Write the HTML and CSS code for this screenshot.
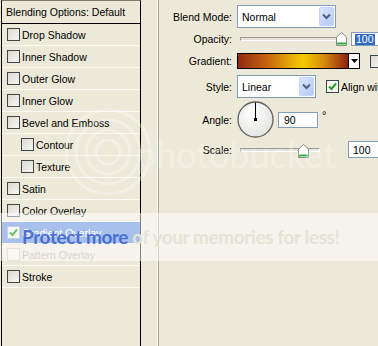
FILE: index.html
```html
<!DOCTYPE html>
<html>
<head>
<meta charset="utf-8">
<link rel="stylesheet" href="styles.css">
</head>
<body>
<div class="app">
  <ul class="list">
    <li class="head">Blending Options: Default</li>
    <li class="item"><span class="cb"></span>Drop Shadow</li>
    <li class="item"><span class="cb"></span>Inner Shadow</li>
    <li class="item"><span class="cb"></span>Outer Glow</li>
    <li class="item"><span class="cb"></span>Inner Glow</li>
    <li class="item"><span class="cb"></span>Bevel and Emboss</li>
    <li class="item sub"><span class="cb"></span>Contour</li>
    <li class="item sub"><span class="cb"></span>Texture</li>
    <li class="item"><span class="cb"></span>Satin</li>
    <li class="item"><span class="cb"></span>Color Overlay</li>
    <li class="item sel"><span class="cb on"><svg width="11" height="11" viewBox="0 0 11 11"><path d="M2 5.5 L4.5 8 L9 2.5" fill="none" stroke="#6cc46c" stroke-width="2"/></svg></span>Gradient Overlay</li>
    <li class="item dis"><span class="cb"></span>Pattern Overlay</li>
    <li class="item"><span class="cb"></span>Stroke</li>
  </ul>
  <div class="strip"></div>
  <div class="divider"></div>
  <div class="props">
    <div class="row r1">
      <span class="lbl">Blend Mode:</span>
      <div class="select wide"><span class="val">Normal</span><svg class="dd" width="15" height="19" viewBox="0 0 15 19"><defs><linearGradient id="g1" x1="0" y1="0" x2="1" y2="1"><stop offset="0" stop-color="#dce7fd"/><stop offset="1" stop-color="#b3c8f5"/></linearGradient></defs><rect x="0.5" y="0.5" width="14" height="18" rx="1.5" fill="url(#g1)" stroke="#c3d3fa"/><path d="M4 7.5 L7.5 11 L11 7.5" fill="none" stroke="#4d6185" stroke-width="2"/></svg></div>
    </div>
    <div class="row r2">
      <span class="lbl">Opacity:</span>
      <div class="slider op"><div class="track"></div><svg class="thumb" width="11" height="14" viewBox="0 0 11 14"><path d="M0.5 5 L5.5 0.5 L10.5 5 V13.5 H0.5 Z" fill="#fff" stroke="#8a8a86"/><path d="M1 11.5 H10" stroke="#2fae3c" stroke-width="2"/></svg></div>
      <div class="input op-in"><span class="hl">100</span></div>
    </div>
    <div class="row r3">
      <span class="lbl">Gradient:</span>
      <div class="grad"></div>
      <div class="garrow"><svg width="7" height="4" viewBox="0 0 7 4"><path d="M0 0 H7 L3.5 4 Z" fill="#000"/></svg></div>
      <div class="rev"></div>
    </div>
    <div class="row r4">
      <span class="lbl">Style:</span>
      <div class="select narrow"><span class="val">Linear</span><svg class="dd" width="15" height="19" viewBox="0 0 15 19"><defs><linearGradient id="g2" x1="0" y1="0" x2="1" y2="1"><stop offset="0" stop-color="#dce7fd"/><stop offset="1" stop-color="#b3c8f5"/></linearGradient></defs><rect x="0.5" y="0.5" width="14" height="18" rx="1.5" fill="url(#g2)" stroke="#c3d3fa"/><path d="M4 7.5 L7.5 11 L11 7.5" fill="none" stroke="#4d6185" stroke-width="2"/></svg></div>
      <span class="cb green"><svg width="11" height="11" viewBox="0 0 11 11"><path d="M2 5.5 L4.5 8 L9 2.5" fill="none" stroke="#21a121" stroke-width="2"/></svg></span>
      <span class="align">Align with Layer</span>
    </div>
    <div class="row r5">
      <span class="lbl">Angle:</span>
      <svg class="dial" width="37" height="37" viewBox="0 0 37 37"><defs><radialGradient id="dg" cx="0.4" cy="0.35" r="0.7"><stop offset="0" stop-color="#ffffff"/><stop offset="1" stop-color="#e2e2e0"/></radialGradient></defs><circle cx="18.5" cy="18.5" r="17.5" fill="url(#dg)" stroke="#5f5f62" stroke-width="1.3"/><line x1="18.5" y1="18.5" x2="18.5" y2="1.5" stroke="#000" stroke-width="1"/><rect x="17" y="17" width="3" height="3" fill="#000"/></svg>
      <div class="input ang">90</div>
      <span class="deg">°</span>
    </div>
    <div class="row r6">
      <span class="lbl">Scale:</span>
      <div class="slider sc"><div class="track"></div><svg class="thumb" width="11" height="14" viewBox="0 0 11 14"><path d="M0.5 5 L5.5 0.5 L10.5 5 V13.5 H0.5 Z" fill="#fff" stroke="#8a8a86"/><path d="M1 11.5 H10" stroke="#2fae3c" stroke-width="2"/></svg></div>
      <div class="input sc-in">100</div>
    </div>
  </div>
</div>
<svg class="rings" width="100" height="100" viewBox="0 0 100 100"><g fill="none" stroke="#ffffff" stroke-opacity="0.3" stroke-width="3"><circle cx="50" cy="50" r="12"/><circle cx="50" cy="50" r="22"/><circle cx="50" cy="50" r="32"/><circle cx="50" cy="50" r="42"/></g></svg>
<div class="pb">photobucket</div>
<div class="band"></div>
<div class="wm"><span class="wm-a">Protect more </span><span class="wm-b">of your memories for less!</span></div>
</body>
</html>
```
FILE: styles.css
```css
html, body {
  margin: 0;
  padding: 0;
}
body {
  width: 378px;
  height: 346px;
  overflow: hidden;
  position: relative;
  background: #ece9d8;
  font-family: "Liberation Sans", Arial, sans-serif;
  font-size: 10.5px;
  color: #000;
}
.app {
  display: flex;
  height: 346px;
}
.list {
  list-style: none;
  margin: 0 0 0 1px;
  padding: 0;
  width: 138px;
  border-left: 1px solid #000;
  border-right: 1px solid #000;
  border-top: 1px solid #7d7b70;
  flex: none;
}
.head {
  height: 22px;
  line-height: 22px;
  padding-left: 4px;
  border-bottom: 1px solid #000;
  white-space: nowrap;
}
.item {
  height: 21px;
  border-bottom: 1px solid #fbfaf5;
  display: flex;
  align-items: center;
  padding-left: 5px;
  white-space: nowrap;
}
.item.sub {
  padding-left: 19px;
}
.cb {
  width: 11px;
  height: 11px;
  border: 1px solid #3b4651;
  background: linear-gradient(135deg, #dcdad0, #f6f5ef);
  margin-right: 2px;
  flex: none;
  display: inline-flex;
  align-items: center;
  justify-content: center;
}
.item.sel {
  background: #a8c0ec;
  color: #fff;
  position: relative;
  z-index: 2;
  border-bottom-color: #f7f6f1;
}
.cb.on {
  background: #f7f7f4;
  border-color: #c4d1e8;
}
.item.dis {
  color: #aca899;
}
.item.dis .cb {
  border-color: #c9c6b8;
  background: #f2f1ea;
}
.strip {
  width: 16px;
  flex: none;
}
.divider {
  width: 0;
  border-left: 1px solid #fbfaf5;
  border-right: 1px solid #a8a697;
  flex: none;
}
.props {
  flex: 1;
  display: flex;
  flex-direction: column;
  min-width: 0;
}
.row {
  display: flex;
  align-items: center;
  white-space: nowrap;
}
.lbl {
  width: 73px;
  text-align: right;
  margin-right: 5px;
  flex: none;
}
.r1 { margin-top: 5px; height: 23px; }
.r2 { margin-top: 4px; height: 14px; }
.r3 { margin-top: 7px; height: 16px; }
.r4 { margin-top: 6px; height: 23px; }
.r5 { margin-top: 3px; height: 37px; }
.r6 { margin-top: 3px; height: 17px; }

.select {
  box-sizing: border-box;
  height: 23px;
  border: 1px solid #7f9db9;
  background: #fff;
  display: flex;
  align-items: center;
  justify-content: space-between;
  padding: 0 1px 0 4px;
  flex: none;
}
.select.wide { width: 99px; }
.select.narrow { width: 79px; }
.dd { display: block; }

.slider {
  position: relative;
  height: 14px;
  flex: none;
  display: flex;
  align-items: center;
}
.slider.op { width: 111px; }
.slider.sc { width: 85px; }
.track {
  margin-left: 3px;
  height: 2px;
  border-top: 1px solid #9d9c94;
  border-left: 1px solid #9d9c94;
  border-bottom: 1px solid #fff;
  border-right: 1px solid #fff;
  background: #e3e1d6;
}
.op .track { width: 104px; }
.sc .track { width: 78px; }
.thumb {
  position: absolute;
  top: 0;
}
.op .thumb { left: 99px; }
.sc .thumb { left: 61px; top: 1px; }

.input {
  box-sizing: border-box;
  border: 1px solid #7f9db9;
  background: #fff;
  display: flex;
  align-items: center;
  flex: none;
}
.op-in {
  margin-left: 3px;
  width: 32px;
  height: 14px;
  padding-left: 3px;
}
.hl {
  background: #316ac5;
  color: #fff;
  padding: 0 1px;
  line-height: 11px;
}
.grad {
  box-sizing: border-box;
  width: 112px;
  height: 16px;
  border: 1px solid #000;
  background: linear-gradient(90deg, #8f2c12 0%, #c4600f 25%, #f0c004 55%, #f6c800 60%, #d88a10 78%, #8d220c 100%);
  flex: none;
}
.garrow {
  box-sizing: border-box;
  width: 12px;
  height: 16px;
  margin-left: -1px;
  border: 1px solid #000;
  background: #fff;
  display: flex;
  align-items: center;
  justify-content: center;
  flex: none;
}
.rev {
  box-sizing: border-box;
  width: 13px;
  height: 13px;
  margin-left: 10px;
  border: 1px solid #3b4651;
  background: linear-gradient(135deg, #dcdad0, #f6f5ef);
  flex: none;
}
.cb.green {
  margin-left: 10px;
  margin-right: 2px;
  background: #f4f4f0;
}
.dial {
  display: block;
  flex: none;
}
.ang {
  margin-left: 4px;
  width: 40px;
  height: 16px;
  padding-left: 5px;
}
.deg {
  margin-left: 4px;
  align-self: flex-start;
  margin-top: 8px;
  font-size: 11px;
}
.sc-in {
  margin-left: 26px;
  width: 32px;
  height: 17px;
  padding-left: 4px;
}

.rings {
  position: absolute;
  left: 58px;
  top: 102px;
}
.pb {
  position: absolute;
  left: 136px;
  top: 132px;
  font-family: Lato, "Open Sans", sans-serif;
  font-size: 36px;
  color: rgba(255, 255, 255, 0.28);
}
.band {
  position: absolute;
  left: 0;
  top: 213px;
  width: 378px;
  height: 48px;
  background: rgba(255, 255, 255, 0.5);
  z-index: 1;
}
.wm {
  position: absolute;
  left: 22px;
  top: 225px;
  font-family: Lato, "Open Sans", sans-serif;
  font-weight: 700;
  font-size: 19px;
  letter-spacing: -0.4px;
  white-space: nowrap;
  z-index: 3;
}
.wm-a {
  color: rgba(40, 82, 200, 0.75);
}
.wm-b {
  color: #e7e4d6;
}
```
